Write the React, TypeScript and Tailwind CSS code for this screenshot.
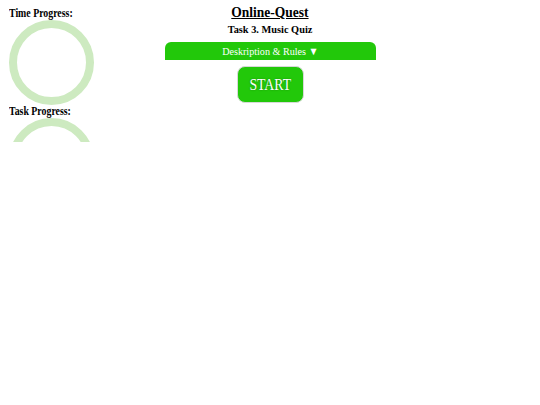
import React from "react";

function Ring({ clip }: { clip?: number }) {
  return (
    <div className="overflow-hidden" style={clip ? { height: clip } : undefined}>
      <svg width="85" height="85" viewBox="0 0 85 85" className="block">
        <circle cx="42.5" cy="42.5" r="38.5" fill="none" stroke="#cdeac0" strokeWidth="8" />
      </svg>
    </div>
  );
}

export default function App() {
  return (
    <div className="w-[540px] h-[405px] bg-white text-black font-['Liberation_Serif',serif] grid grid-cols-[100px_1fr_100px]">
      {/* Progress side panel */}
      <div className="pl-[9px] pt-[6px]">
        <div className="h-[14px] text-[12px] font-bold leading-[14px]">
          <span className="inline-block scale-x-[0.82] origin-left whitespace-nowrap">Time Progress:</span>
        </div>
        <Ring />
        <div className="h-[14px] text-[12px] font-bold leading-[14px] -mt-[1px]">
          <span className="inline-block scale-x-[0.82] origin-left whitespace-nowrap">Task Progress:</span>
        </div>
        <Ring clip={24} />
      </div>

      {/* Main */}
      <div className="flex flex-col items-center">
        <h1 className="text-[15px] font-bold leading-[18px] mt-[3px]">
          <span className="inline-block scale-x-[0.9] whitespace-nowrap underline">Online-Quest</span>
        </h1>
        <h2 className="text-[11px] font-bold leading-[13px] mt-[2px]">
          <span className="inline-block scale-x-[0.94] whitespace-nowrap">Task 3. Music Quiz</span>
        </h2>
        <div className="w-[211px] h-[18px] mt-[6px] bg-[#22c80a] rounded-t-[6px] text-white text-[11px] leading-[18px] text-center">
          <span className="inline-block scale-x-[0.92] whitespace-nowrap">Deskription &amp; Rules ▼</span>
        </div>
        <button className="mt-[6px] w-[67px] h-[37px] bg-[#22c80a] border border-[#d8d8d8] rounded-[8px] text-white text-[16px] leading-none [text-shadow:0_0_2px_rgba(0,0,0,0.35)]">
          <span className="inline-block scale-x-[0.86] whitespace-nowrap">START</span>
        </button>
      </div>
      <div />
    </div>
  );
}
